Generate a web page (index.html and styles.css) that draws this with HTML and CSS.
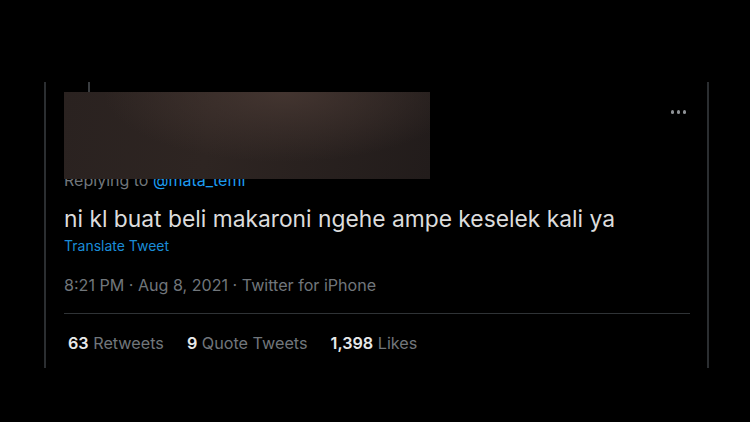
FILE: index.html
```html
<!DOCTYPE html>
<html lang="en">
<head>
<meta charset="UTF-8" />
<meta name="viewport" content="width=device-width, initial-scale=1" />
<title>Tweet</title>
<link rel="stylesheet" href="styles.css">
</head>
<body>

<div class="tweet">
  <div class="tweet-head">
    <div class="avatar-col">
      <div class="thread-line"></div>
      <div class="avatar"></div>
    </div>
    <div class="head-info"></div>
    <div class="more"><span></span><span></span><span></span></div>
  </div>

  <div class="replying">Replying to <a href="#">@mata_temi</a></div>

  <p class="tweet-text">ni kl buat beli makaroni ngehe ampe keselek kali ya</p>
  <a class="translate" href="#">Translate Tweet</a>

  <div class="meta">8:21 PM · Aug 8, 2021 · Twitter for iPhone</div>

  <div class="stats">
    <span><b>63</b> Retweets</span>
    <span><b>9</b> Quote Tweets</span>
    <span><b>1,398</b> Likes</span>
  </div>

  <!-- name and handle blurred out -->
  <div class="censor"></div>
</div>

</body>
</html>
```

FILE: styles.css
```css
body {
  margin: 0;
  padding: 82px 0 0 44px;
  background: #000;
  font-family: Inter, "Noto Sans", sans-serif;
  color: #d9d9d9;
}
.tweet {
  position: relative;
  width: 626px;
  height: 286px;
  padding: 0 17px 0 18px;
  border-left: 2px solid #2b2e31;
  border-right: 2px solid #2b2e31;
}
.tweet-head {
  display: flex;
  align-items: flex-start;
  height: 66px;
}
.avatar-col {
  width: 50px;
  display: flex;
  flex-direction: column;
  align-items: center;
}
.thread-line {
  width: 2px;
  height: 16px;
  background: #3a3d40;
}
.avatar {
  width: 50px;
  height: 50px;
  border-radius: 50%;
  background: #a99c86;
}
.head-info {
  flex: 1;
}
.more {
  display: flex;
  gap: 2.5px;
  margin: 28px 4px 0 0;
}
.more span {
  width: 3.5px;
  height: 3.5px;
  border-radius: 50%;
  background: #8e9296;
}
.replying {
  margin-top: 22px;
  font-size: 16px;
  line-height: 20px;
  color: #71767b;
}
.replying a {
  color: #1d9bf0;
  text-decoration: none;
}
.tweet-text {
  margin: 15px 0 0;
  font-size: 22.8px;
  line-height: 28px;
  color: #dcdcdc;
}
.translate {
  display: block;
  margin-top: 3px;
  font-size: 14px;
  line-height: 20px;
  color: #1a8cd8;
  text-decoration: none;
}
.meta {
  margin-top: 18px;
  padding-bottom: 17px;
  border-bottom: 1px solid #2f3336;
  font-size: 16.1px;
  line-height: 22px;
  color: #71767b;
}
.stats {
  display: flex;
  gap: 23px;
  margin-top: 18px;
  padding-left: 4px;
  font-size: 16.2px;
  line-height: 22px;
  color: #71767b;
}
.stats b {
  font-weight: 600;
  color: #e7e9ea;
}
.censor {
  position: absolute;
  left: 18px;
  top: 10px;
  width: 366px;
  height: 87px;
  background:
    radial-gradient(ellipse 180px 70px at 60% 0%, rgba(70, 55, 50, 0.9), rgba(70, 55, 50, 0) 100%),
    linear-gradient(100deg, #2a2220 0%, #2e2522 40%, #221c1b 100%);
}
```
